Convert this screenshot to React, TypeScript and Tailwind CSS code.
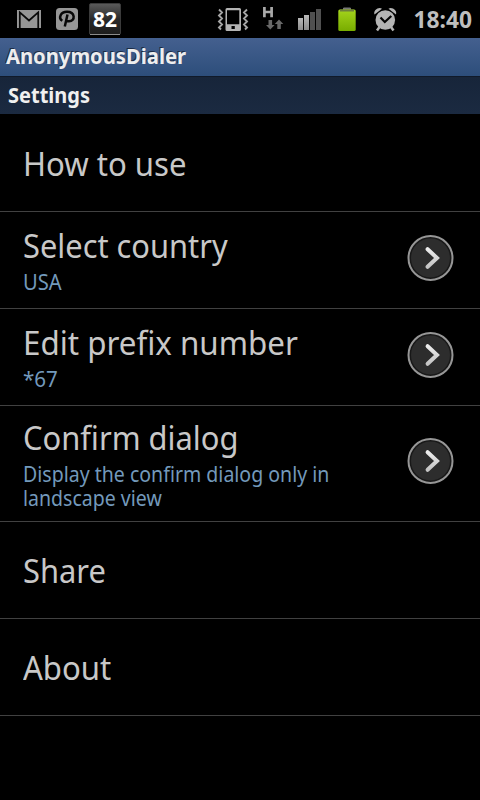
import React from "react";

function StatusBar() {
  return (
    <header className="flex h-[38px] items-center bg-black">
      <svg className="h-[38px] w-[480px]" viewBox="0 0 480 38">
        <defs>
          <linearGradient id="badge" x1="0" y1="0" x2="0" y2="1">
            <stop offset="0" stopColor="#5c5c5c" />
            <stop offset=".5" stopColor="#2a2a2a" />
            <stop offset="1" stopColor="#1c1c1c" />
          </linearGradient>
          <linearGradient id="bars" x1="0" y1="0" x2="0" y2="1">
            <stop offset="0" stopColor="#b8b8b8" />
            <stop offset="1" stopColor="#8c8c8c" />
          </linearGradient>
          <linearGradient id="cell" x1="0" y1="0" x2="0" y2="1">
            <stop offset="0" stopColor="#a4d41c" />
            <stop offset="1" stopColor="#78ac00" />
          </linearGradient>
        </defs>
        {/* mail */}
        <rect x="17" y="10" width="24" height="18" fill="#969696" />
        <path d="M19.800 28V12.300L29 20.500l9.200-8.200V28" fill="none" stroke="#0a0a0a" strokeWidth="1.700" />
        {/* P badge */}
        <rect x="56" y="8" width="22" height="22" rx="3.500" fill="#969696" />
        <path d="M62.300 20.800c-4.200-2.800-1.800-9 4.700-9 8.200 0 8.800 9.200 2 9.500-1.200 0-2.200-.4-2.800-1.100M67.500 14.500l-2.700 12" fill="none" stroke="#080808" strokeWidth="2.500" />
        {/* counter */}
        <rect x="89.500" y="3.500" width="31" height="31" rx="1.500" fill="url(#badge)" stroke="#3b3b3b" />
        <path d="M90 34.500h30" stroke="#8b8b8b" />
        <text x="105" y="27" textAnchor="middle" textLength="24" lengthAdjust="spacingAndGlyphs" className="fill-white font-['Noto_Sans',sans-serif] text-[20.500px] font-bold">82</text>
        {/* vibrating phone */}
        <path fillRule="evenodd" d="M227 8h12.500a1.500 1.500 0 0 1 1.500 1.500v20a1.500 1.500 0 0 1-1.500 1.500H227a1.500 1.500 0 0 1-1.500-1.500v-20A1.500 1.500 0 0 1 227 8Zm0 2.300v14h12.300v-14Zm4.500 15.700v3h3.300v-3Z" fill="#b4b4b4" />
        <path d="M219 9.500l3 3-3 3 3 3-3 3 3 3-3 3 2 2M247 9.500l-3 3 3 3-3 3 3 3-3 3 3 3-2 2" fill="none" stroke="#a5a5a5" strokeWidth="1.900" />
        {/* data network */}
        <path d="M264.400 7v10.200M271.600 7v10.200M264 12h8" stroke="#a9a9a9" strokeWidth="2.700" fill="none" />
        <path d="M268.500 20v5H266l4.300 4.500 4.300-4.500h-2.500v-5ZM277.300 29v-5h-2.500l4.200-4.500 4.300 4.500h-2.500v5Z" fill="#686868" />
        {/* signal */}
        <rect x="298" y="18" width="5" height="12" fill="url(#bars)" />
        <rect x="304" y="15" width="5" height="15" fill="url(#bars)" />
        <rect x="310" y="12" width="5" height="18" fill="#505050" />
        <rect x="316" y="9" width="5" height="21" fill="#505050" />
        {/* battery */}
        <path d="M343.500 10V8h7v2" fill="#777" stroke="#777" />
        <rect x="338.300" y="9.500" width="17.400" height="21.500" rx="1.500" fill="url(#cell)" />
        <path d="M340 10.500h14" stroke="#6d7f3c" strokeWidth="2" />
        {/* alarm */}
        <circle cx="385.300" cy="20" r="9.800" fill="#b4b4b4" />
        <path d="M374.500 14.500c-1.500-4 4-8 7.500-5.800ZM396 14.500c1.500-4-4-8-7.500-5.800Z" fill="#b4b4b4" />
        <path d="M379.500 27l-2.500 3.500M391 27l2.500 3.500" stroke="#b4b4b4" strokeWidth="2.500" />
        <path d="M380.500 17.500l4.300 4.500 6.500-6" fill="none" stroke="#050505" strokeWidth="2.200" />
        <text x="413.500" y="27.500" textLength="58.500" lengthAdjust="spacingAndGlyphs" className="fill-[#bebebe] font-['Noto_Sans',sans-serif] text-[24px] font-bold">18:40</text>
      </svg>
    </header>
  );
}

function ArrowButton() {
  return (
    <svg className="h-12 w-12 shrink-0" viewBox="0 0 48 48">
      <defs>
        <linearGradient id="chevron" x1="0" y1="0" x2="0" y2="1">
          <stop offset="0" stopColor="#ececec" />
          <stop offset="1" stopColor="#c4c4c4" />
        </linearGradient>
      </defs>
      <circle cx="23.500" cy="24" r="22" fill="#181818" stroke="#969696" strokeWidth="2" />
      <circle cx="23.500" cy="24" r="19.500" fill="#2d2d2d" />
      <path d="M20.600 15.200L30 24l-9.400 8.800" fill="none" stroke="url(#chevron)" strokeWidth="4" strokeLinecap="round" />
    </svg>
  );
}

type RowProps = {
  title: string;
  titleScale: string;
  summary?: string;
  summaryScale?: string;
  size: string;
  arrow?: string;
};

function Row({ title, titleScale, summary, summaryScale = "", size, arrow }: RowProps) {
  return (
    <li className={`flex items-start justify-between border-b border-[#414141] pl-[23px] pr-[25px] ${size}`}>
      <div className="flex flex-col items-start whitespace-nowrap">
        <span className={`origin-left text-[33px] leading-[40px] text-[#c8c8c8] ${titleScale}`}>{title}</span>
        {summary && (
          <p className={`mt-1 origin-left text-[21px] leading-6 whitespace-pre-line text-[#7399bb] ${summaryScale}`}>{summary}</p>
        )}
      </div>
      {arrow && (
        <div className={arrow}>
          <ArrowButton />
        </div>
      )}
    </li>
  );
}

export default function App() {
  return (
    <div className="h-[800px] w-[480px] overflow-hidden bg-black font-['Noto_Sans',sans-serif]">
      <StatusBar />
      <div className="flex h-[39px] items-start border-b border-[#101a2a] bg-linear-to-b from-[#44608f] to-[#2d4e7b] pl-[6px]">
        <h1 className="origin-left scale-x-[0.962] text-[21px] leading-[36px] font-bold text-[#eeeeee] [text-shadow:-1px_-1px_0_#1c2c45]">AnonymousDialer</h1>
      </div>
      <div className="flex h-[37px] items-center bg-linear-to-b from-[#17253a] to-[#1b2a41] pl-[8px]">
        <h2 className="origin-left scale-x-[0.952] text-[21px] leading-[37px] font-bold text-[#f0f0f0]">Settings</h2>
      </div>
      <ul>
        <Row title="How to use" titleScale="scale-x-[0.942]" size="h-[98px] pt-[30px]" />
        <Row title="Select country" titleScale="scale-x-[0.934]" summary="USA" summaryScale="scale-x-[0.96]" size="h-[97px] pt-[14px]" arrow="pt-[8px]" />
        <Row title="Edit prefix number" titleScale="scale-x-[0.949]" summary="*67" summaryScale="scale-x-[0.98]" size="h-[97px] pt-[14px]" arrow="pt-[8px]" />
        <Row
          title="Confirm dialog"
          titleScale="scale-x-[0.936]"
          summary={"Display the confirm dialog only in\nlandscape view"}
          summaryScale="scale-x-[0.93]"
          size="h-[116px] pt-[12px]"
          arrow="pt-[19px]"
        />
        <Row title="Share" titleScale="scale-x-[0.936]" size="h-[97px] pt-[29px]" />
        <Row title="About" titleScale="scale-x-[0.942]" size="h-[97px] pt-[29px]" />
      </ul>
    </div>
  );
}
